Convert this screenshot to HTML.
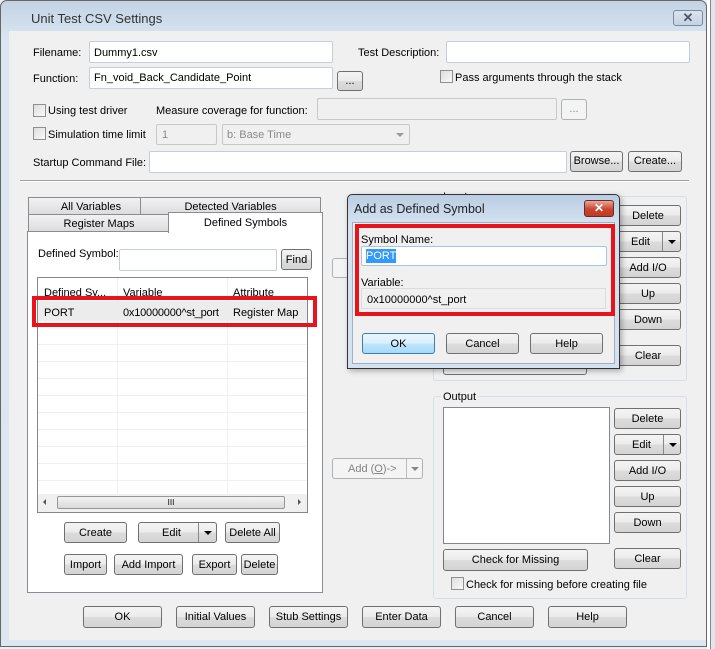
<!DOCTYPE html>
<html><head><style>
*{box-sizing:border-box;margin:0;padding:0}
body{width:715px;height:649px;overflow:hidden;background:#e8eef5;font-family:"Liberation Sans",sans-serif;font-size:11px;color:#000;position:relative}
.a{position:absolute}
.t{position:absolute;white-space:nowrap;line-height:14px;margin-top:1px}
.in{position:absolute;background:#fff;border:1px solid #c5cdd6;border-radius:2px}
.dis{position:absolute;background:#f0f0f0;border:1px solid #c8c8c8;border-radius:2px;color:#8a8a8a}
.b{position:absolute;border:1px solid #707070;border-radius:3px;background:linear-gradient(#f4f4f4,#ebebeb 50%,#dcdcdc 51%,#d4d4d4);text-align:center;line-height:20px;white-space:nowrap}
.bd{position:absolute;border:1px solid #adb2b5;border-radius:3px;background:#f4f4f4;color:#838383;text-align:center;white-space:nowrap}
.cb{position:absolute;width:13px;height:13px;border:1px solid #8f8f8f;background:linear-gradient(135deg,#ddd,#fafafa)}
.arr{position:absolute;width:0;height:0;border-left:4px solid transparent;border-right:4px solid transparent;border-top:4px solid #000}
.red{position:absolute;border:4px solid #e8141c}
</style></head><body>
<div class="a" style="left:0;top:0;width:707px;height:647px;border:1px solid #666;border-radius:7px 7px 0 0;background:linear-gradient(#c3d3e4,#dae6f2 40px,#dce7f2)"></div>
<div class="a" style="left:707px;top:0;width:8px;height:649px;background:#fff"></div>
<div class="a" style="left:710px;top:0;width:5px;height:649px;background:#dfe6ee;border-left:1px solid #888"></div>
<div class="t" style="left:31px;top:11px;font-size:13px;color:#333">Unit Test CSV Settings</div>
<div class="a" style="left:673px;top:10px;width:30px;height:16px;border:1px solid #7a8a9d;border-radius:3px;background:linear-gradient(#dbe4ee,#c5d2e0);color:#4a5a6d;font-size:13px;font-weight:bold;text-align:center;line-height:14px">✕</div>
<div class="a" style="left:9px;top:31px;width:697px;height:609px;background:#f0f0f0"></div>

<div class="t" style="left:33px;top:45px">Filename:</div>
<div class="in" style="left:89px;top:41px;width:244px;height:22px"></div>
<div class="t" style="left:94px;top:45px">Dummy1.csv</div>
<div class="t" style="left:33px;top:71px">Function:</div>
<div class="in" style="left:89px;top:67px;width:244px;height:22px"></div>
<div class="t" style="left:94px;top:70px">Fn_void_Back_Candidate_Point</div>
<div class="b" style="left:337px;top:71px;width:26px;height:20px;line-height:18px">...</div>
<div class="t" style="left:358px;top:45px">Test Description:</div>
<div class="in" style="left:446px;top:41px;width:244px;height:22px"></div>
<div class="cb" style="left:440px;top:70px"></div>
<div class="t" style="left:455px;top:70px">Pass arguments through the stack</div>

<div class="cb" style="left:33px;top:104px"></div>
<div class="t" style="left:48px;top:103px">Using test driver</div>
<div class="t" style="left:156px;top:103px">Measure coverage for function:</div>
<div class="dis" style="left:317px;top:98px;width:240px;height:22px"></div>
<div class="bd" style="left:561px;top:99px;width:26px;height:21px;line-height:18px">...</div>
<div class="cb" style="left:33px;top:127px"></div>
<div class="t" style="left:48px;top:127px">Simulation time limit</div>
<div class="dis" style="left:156px;top:124px;width:61px;height:21px;padding:4px 5px">1</div>
<div class="dis" style="left:222px;top:124px;width:188px;height:21px;padding:4px 4px">b: Base Time</div>
<div class="arr" style="left:396px;top:133px;border-top-color:#999"></div>
<div class="t" style="left:33px;top:155px">Startup Command File:</div>
<div class="in" style="left:149px;top:151px;width:418px;height:22px"></div>
<div class="b" style="left:570px;top:151px;width:53px;height:21px;line-height:19px">Browse...</div>
<div class="b" style="left:628px;top:151px;width:54px;height:21px;line-height:19px">Create...</div>
<div class="a" style="left:20px;top:180px;width:669px;height:2px;border-top:1px solid #a0a0a0;border-bottom:1px solid #fff"></div>

<div class="a" style="left:28px;top:197px;width:126px;height:18px;border:1px solid #898c95;background:linear-gradient(#f2f2f2,#dcdcdc);text-align:center;line-height:18px">All Variables</div>
<div class="a" style="left:140px;top:197px;width:181px;height:18px;border:1px solid #898c95;background:linear-gradient(#f2f2f2,#dcdcdc);text-align:center;line-height:18px">Detected Variables</div>
<div class="a" style="left:28px;top:214px;width:142px;height:18px;border:1px solid #898c95;background:linear-gradient(#f2f2f2,#dcdcdc);text-align:center;line-height:19px">Register Maps</div>
<div class="a" style="left:27px;top:231px;width:296px;height:362px;border:1px solid #898c95;background:#fff"></div>
<div class="a" style="left:168px;top:212px;width:155px;height:21px;border:1px solid #898c95;border-bottom:none;background:#fff;text-align:center;line-height:21px">Defined Symbols</div>

<div class="t" style="left:38px;top:246px">Defined Symbol:</div>
<div class="in" style="left:119px;top:249px;width:158px;height:22px"></div>
<div class="b" style="left:281px;top:249px;width:31px;height:21px">Find</div>
<div class="a" style="left:37px;top:277px;width:271px;height:236px;border:1px solid #828790;background:#fff;overflow:hidden">
 <div class="a" style="left:79px;top:0;width:1px;height:216px;background:#f0f0f0"></div>
 <div class="a" style="left:189px;top:0;width:1px;height:216px;background:#f0f0f0"></div>
 <div class="a" style="left:0;top:23px;width:269px;height:20px;background:#ececec"></div>
 <div class="a" style="left:0;top:50px;width:269px;height:166px;background:repeating-linear-gradient(#fff 0,#fff 16px,#f0f0f0 16px,#f0f0f0 17px)"></div>
 <div class="a" style="left:79px;top:50px;width:1px;height:166px;background:#f0f0f0"></div>
 <div class="a" style="left:189px;top:50px;width:1px;height:166px;background:#f0f0f0"></div>
 <div class="a" style="left:0;top:216px;width:269px;height:18px;background:#f0f0f0"></div>
 <div class="a" style="left:19px;top:218px;width:228px;height:13px;border:1px solid #979797;border-radius:2px;background:linear-gradient(#f3f3f3,#dadada);text-align:center;font-size:8px;line-height:11px">III</div>
 <div class="a" style="left:5px;top:221px;border-top:3px solid transparent;border-bottom:3px solid transparent;border-right:3px solid #555"></div>
 <div class="a" style="left:260px;top:221px;border-top:3px solid transparent;border-bottom:3px solid transparent;border-left:3px solid #555"></div>
</div>
<div class="t" style="left:44px;top:285px">Defined Sy...</div>
<div class="t" style="left:123px;top:285px">Variable</div>
<div class="t" style="left:233px;top:285px">Attribute</div>
<div class="t" style="left:44px;top:305px">PORT</div>
<div class="t" style="left:123px;top:305px;letter-spacing:-0.2px">0x10000000^st_port</div>
<div class="t" style="left:233px;top:305px">Register Map</div>
<div class="red" style="left:32px;top:296px;width:285px;height:31px"></div>

<div class="b" style="left:64px;top:522px;width:63px;height:21px">Create</div>
<div class="b" style="left:138px;top:522px;width:79px;height:21px;text-align:left;padding-left:23px">Edit</div>
<div class="a" style="left:198px;top:523px;width:1px;height:19px;background:#888"></div>
<div class="arr" style="left:204px;top:531px"></div>
<div class="b" style="left:225px;top:522px;width:55px;height:21px">Delete All</div>
<div class="b" style="left:64px;top:554px;width:43px;height:21px">Import</div>
<div class="b" style="left:114px;top:554px;width:69px;height:21px">Add Import</div>
<div class="b" style="left:192px;top:554px;width:45px;height:21px">Export</div>
<div class="b" style="left:241px;top:554px;width:37px;height:21px">Delete</div>

<div class="bd" style="left:332px;top:258px;width:20px;height:20px"></div>
<div class="bd" style="left:332px;top:458px;width:91px;height:21px;line-height:20px;text-align:left;padding-left:15px">Add (<u>O</u>)-&gt;</div>
<div class="a" style="left:406px;top:459px;width:1px;height:19px;background:#bbb"></div>
<div class="arr" style="left:411px;top:467px;border-top-color:#888"></div>

<div class="a" style="left:433px;top:196px;width:254px;height:185px;border:1px solid #d5dfe5;border-radius:3px"></div>
<div class="t" style="left:441px;top:189px;background:#f0f0f0;padding:0 2px">Input</div>
<div class="b" style="left:615px;top:205px;width:66px;height:21px">Delete</div>
<div class="b" style="left:615px;top:231px;width:66px;height:21px;text-align:left;padding-left:15px">Edit</div>
<div class="a" style="left:662px;top:232px;width:1px;height:19px;background:#888"></div>
<div class="arr" style="left:668px;top:240px"></div>
<div class="b" style="left:615px;top:257px;width:66px;height:21px">Add I/O</div>
<div class="b" style="left:615px;top:283px;width:66px;height:21px">Up</div>
<div class="b" style="left:615px;top:309px;width:66px;height:21px">Down</div>
<div class="b" style="left:615px;top:345px;width:66px;height:21px">Clear</div>
<div class="a" style="left:443px;top:355px;width:144px;height:20px;border:1px solid #707070;border-radius:3px"></div>

<div class="a" style="left:433px;top:396px;width:254px;height:203px;border:1px solid #d5dfe5;border-radius:3px"></div>
<div class="t" style="left:441px;top:389px;background:#f0f0f0;padding:0 2px">Output</div>
<div class="a" style="left:443px;top:407px;width:167px;height:137px;border:1px solid #828790;background:#fff"></div>
<div class="b" style="left:614px;top:408px;width:67px;height:21px">Delete</div>
<div class="b" style="left:614px;top:434px;width:67px;height:21px;text-align:left;padding-left:17px">Edit</div>
<div class="a" style="left:663px;top:435px;width:1px;height:19px;background:#888"></div>
<div class="arr" style="left:669px;top:443px"></div>
<div class="b" style="left:614px;top:460px;width:67px;height:21px">Add I/O</div>
<div class="b" style="left:614px;top:486px;width:67px;height:21px">Up</div>
<div class="b" style="left:614px;top:512px;width:67px;height:21px">Down</div>
<div class="b" style="left:614px;top:548px;width:67px;height:21px">Clear</div>
<div class="b" style="left:443px;top:549px;width:145px;height:22px">Check for Missing</div>
<div class="cb" style="left:451px;top:577px"></div>
<div class="t" style="left:466px;top:577px">Check for missing before creating file</div>

<div class="b" style="left:83px;top:606px;width:79px;height:22px">OK</div>
<div class="b" style="left:176px;top:606px;width:79px;height:22px">Initial Values</div>
<div class="b" style="left:269px;top:606px;width:79px;height:22px">Stub Settings</div>
<div class="b" style="left:362px;top:606px;width:79px;height:22px">Enter Data</div>
<div class="b" style="left:455px;top:606px;width:79px;height:22px">Cancel</div>
<div class="b" style="left:548px;top:606px;width:79px;height:22px">Help</div>

<div class="a" style="left:347px;top:194px;width:273px;height:175px;border:1px solid #333;border-radius:5px 5px 0 0;background:linear-gradient(#b9cde2,#d4e2f0 28px);box-shadow:2px 2px 6px rgba(0,0,0,.3)"></div>
<div class="t" style="left:354px;top:201px;font-size:12.5px;color:#222">Add as Defined Symbol</div>
<div class="a" style="left:584px;top:200px;width:30px;height:17px;border:1px solid #6d2a2a;border-radius:3px;background:linear-gradient(#e9a99a,#c9452f 55%,#c13a23);color:#fff;font-weight:bold;text-align:center;line-height:15px;font-size:12px">✕</div>
<div class="a" style="left:352px;top:222px;width:263px;height:142px;background:#f0f0f0;border:1px solid #a0afc3"></div>
<div class="red" style="left:355px;top:224px;width:260px;height:92px"></div>
<div class="t" style="left:361px;top:232px">Symbol Name:</div>
<div class="in" style="left:361px;top:246px;width:246px;height:20px;border-color:#a6c5e2"></div>
<div class="a" style="left:366px;top:249px;width:30px;height:14px;background:#3399ff;color:#fff;line-height:15px">PORT</div>
<div class="t" style="left:361px;top:275px">Variable:</div>
<div class="a" style="left:361px;top:288px;width:245px;height:21px;border:1px solid #dcdcdc;background:#f0f0f0;padding:4px 5px;line-height:14px">0x10000000^st_port</div>
<div class="b" style="left:362px;top:333px;width:73px;height:21px;border-color:#3c7fb1;background:linear-gradient(#eaf6fd,#d9f0fc 50%,#bee6fd 51%,#a7d9f5)">OK</div>
<div class="b" style="left:446px;top:333px;width:73px;height:21px">Cancel</div>
<div class="b" style="left:530px;top:333px;width:73px;height:21px">Help</div>
</body></html>
